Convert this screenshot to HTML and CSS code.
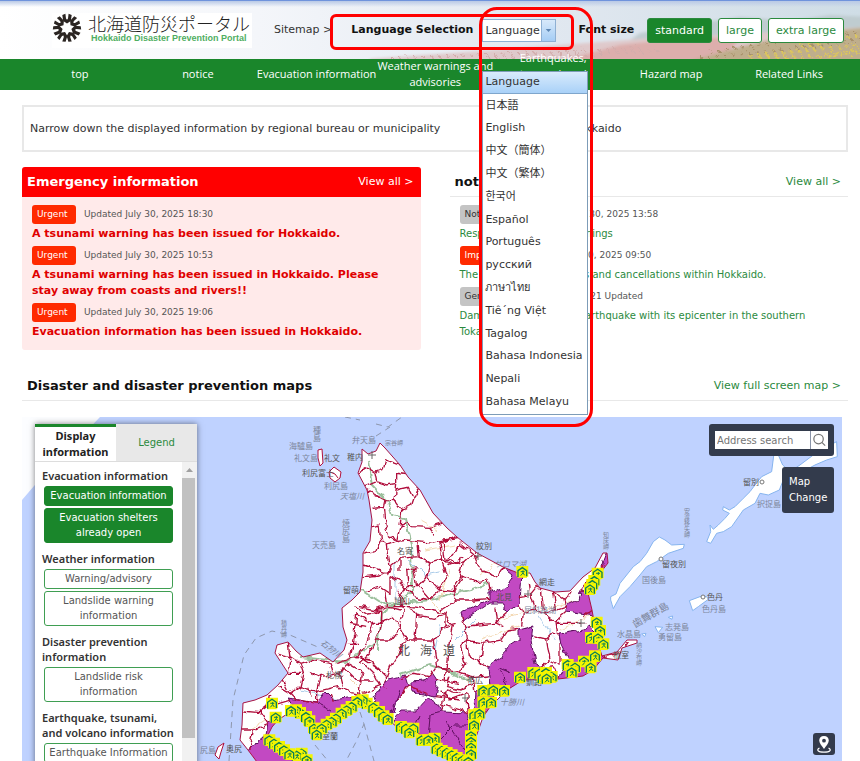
FILE: index.html
```html
<!DOCTYPE html>
<html lang="en">
<head>
    <meta charset="UTF-8">
    <meta name="viewport" content="width=device-width, initial-scale=1.0">
    <title>Hokkaido Disaster Prevention Portal</title>
    <link rel="stylesheet" href="styles.css">
</head>
<body>

<header class="header">
    <!-- flower field behind the header -->
    <svg class="header-bg" viewBox="0 0 860 59" preserveAspectRatio="xMaxYMin slice" aria-hidden="true">
        <defs>
            <linearGradient id="sky" x1="0" x2="1" y1="0" y2="0">
                <stop offset="0" stop-color="#fff"/>
                <stop offset=".3" stop-color="#f4f6fa"/>
                <stop offset=".6" stop-color="#e3e9f1"/>
                <stop offset="1" stop-color="#cfdde6"/>
            </linearGradient>
            <linearGradient id="fog" x1="0" x2="0" y1="0" y2="1">
                <stop offset="0" stop-color="#b9c9e6"/>
                <stop offset="1" stop-color="#b9c9e6" stop-opacity="0"/>
            </linearGradient>
            <filter id="soft"><feGaussianBlur stdDeviation="1.5"/></filter>
            <filter id="grain" x="0" y="0" width="1" height="1">
                <feTurbulence type="fractalNoise" baseFrequency=".4" numOctaves="2" result="n"/>
                <feDisplacementMap in="SourceGraphic" in2="n" scale="9"/>
            </filter>
        </defs>
        <rect width="860" height="59" fill="url(#sky)"/>
        <rect width="860" height="6" fill="url(#fog)"/>
        <g filter="url(#soft)">
            <path d="M640 32 L700 22 L740 16 L790 20 L830 14 L870 16 V60 H600 Z" fill="#bfccd0"/>
            <path d="M370 58 L480 50 L560 44 L640 38 L720 34 L870 26 V62 H370 Z" fill="#dfc9cb"/>
            <path d="M560 60 L620 44 L690 36 L740 38 L720 60 Z" fill="#dcaeac"/>
            <path d="M690 60 L740 46 L790 34 L870 26 V62 Z" fill="#bfae8c"/>
        </g>
        <g filter="url(#grain)" stroke-width="2" stroke-dasharray="3 5" fill="none">
            <path d="M390 57 L520 53 L640 47 M480 58 L560 55 L660 50" stroke="#d3adac"/>
            <path d="M710 52 L780 40 L860 30 M700 57 L790 48 L860 38" stroke="#a8906a"/>
            <path d="M750 56 L800 50 L860 44 M760 58 L860 52 M800 45 L860 35 M820 57 L860 48" stroke="#dcc65c" stroke-width="3"/>
        </g>
    </svg>

    <a class="logo" href="#">
        <svg class="logo-mark" viewBox="0 0 30 30" aria-hidden="true">
            <defs>
                <path id="ray" d="M15 10.500 L11.200 8 L10.300 2 L13.400 .8 L14 5.600 L15 6.800 L16 5.600 L16.600 .8 L19.700 2 L18.800 8 Z"/>
            </defs>
            <g fill="#2b2522">
                <use href="#ray"/>
                <use href="#ray" transform="rotate(51.4 15 15)"/>
                <use href="#ray" transform="rotate(102.9 15 15)"/>
                <use href="#ray" transform="rotate(154.3 15 15)"/>
                <use href="#ray" transform="rotate(205.7 15 15)"/>
                <use href="#ray" transform="rotate(257.1 15 15)"/>
                <use href="#ray" transform="rotate(308.6 15 15)"/>
            </g>
        </svg>
        <span class="logo-text">
            <span class="logo-ja" lang="ja">北海道防災ポータル</span>
            <span class="logo-en">Hokkaido Disaster Prevention Portal</span>
        </span>
    </a>

    <a class="sitemap" href="#">Sitemap &gt;</a>

    <div class="language">
        <label class="label" for="language">Language Selection</label>
        <div class="language-box">
            <select class="language-select" id="language">
                <option>Language</option>
            </select>
            <svg class="language-arrow" viewBox="0 0 14 21" aria-hidden="true"><path d="M4 9 H10 L7 12 Z" fill="#5c86b4"/></svg>
            <ul class="language-list">
                <li class="active">Language</li>
                <li lang="ja">日本語</li>
                <li>English</li>
                <li lang="ja">中文（簡体）</li>
                <li lang="ja">中文（繁体）</li>
                <li lang="ko">한국어</li>
                <li>Español</li>
                <li>Português</li>
                <li>русский</li>
                <li lang="th">ภาษาไทย</li>
                <li>Tiê´ng Việt</li>
                <li>Tagalog</li>
                <li>Bahasa Indonesia</li>
                <li>Nepali</li>
                <li>Bahasa Melayu</li>
            </ul>
        </div>
    </div>

    <div class="font-size">
        <span class="label">Font size</span>
        <button class="size-btn on" type="button">standard</button>
        <button class="size-btn" type="button">large</button>
        <button class="size-btn" type="button">extra large</button>
    </div>

    <div class="mark mark-row"></div>
    <div class="mark mark-list"></div>
</header>

<nav class="nav">
    <a href="#">top</a>
    <a href="#">notice</a>
    <a class="one-line" href="#">Evacuation information</a>
    <a href="#">Weather warnings and advisories</a>
    <a href="#">Earthquakes,<br>tsunami, and<br>volcanoes</a>
    <a href="#">Hazard map</a>
    <a href="#">Related Links</a>
</nav>

<main class="main">
    <div class="narrow">
        <span>Narrow down the displayed information by regional bureau or municipality</span>
        <span class="narrow-area">Hokkaido</span>
    </div>

    <div class="columns">
        <section class="emergency">
            <div class="emergency-head">
                <h2>Emergency information</h2>
                <a href="#">View all &gt;</a>
            </div>
            <ul class="items">
                <li>
                    <span class="badge urgent">Urgent</span><span class="date">Updated July 30, 2025 18:30</span>
                    <a href="#">A tsunami warning has been issued for Hokkaido.</a>
                </li>
                <li>
                    <span class="badge urgent">Urgent</span><span class="date">Updated July 30, 2025 10:53</span>
                    <a href="#">A tsunami warning has been issued in Hokkaido. Please stay away from coasts and rivers!!</a>
                </li>
                <li>
                    <span class="badge urgent">Urgent</span><span class="date">Updated July 30, 2025 19:06</span>
                    <a href="#">Evacuation information has been issued in Hokkaido.</a>
                </li>
            </ul>
        </section>

        <section class="notice">
            <div class="section-head">
                <h2>notice</h2>
                <a href="#">View all &gt;</a>
            </div>
            <ul class="items">
                <li>
                    <span class="badge">Notification</span><span class="date">Updated July 30, 2025 13:58</span>
                    <a href="#">Response to tsunami warnings</a>
                </li>
                <li>
                    <span class="badge urgent">Important</span><span class="date">Updated July 30, 2025 09:50</span>
                    <a href="#">The status of suspensions and cancellations within Hokkaido.</a>
                </li>
                <li>
                    <span class="badge">General</span><span class="date">August 19, 2024 21 Updated</span>
                    <a href="#">Damage caused by the earthquake with its epicenter in the southern Tokachi area (1st report)</a>
                </li>
            </ul>
        </section>
    </div>

    <section class="maps">
        <div class="section-head">
            <h2>Disaster and disaster prevention maps</h2>
            <a href="#">View full screen map &gt;</a>
        </div>

        <div class="map">
            <svg class="map-canvas" viewBox="22 417 820 344" preserveAspectRatio="xMinYMin slice" role="img" aria-label="Map of Hokkaido">
                <defs>
                    <g id="shelter">
                        <path d="M-18 -17 H18 V15 H14 V18 H-14 V14 H-18 Z" fill="#f4f500"/>
                        <path d="M-13 14 V-3 L0 -12 L13 -3 V14 M-13 3 V16" fill="none" stroke="#0b7f55" stroke-width="4"/>
                        <path d="M2 -4 V4 L-5 12 M2 4 L7 11 M-5 0 H7" fill="none" stroke="#0b7f55" stroke-width="3"/>
                    </g>
                    <path id="hokkaido" d="M362 449 L368 454 L376 451 L380 443 L385 448 L400 465 L408 477 L420 490 L433 513 L447 528 L457 537 L477 553 L503 567 L518 573 L530 573 L535 582 L540 588 L555 592 L570 591 L583 577 L595 568 L603 553 L607 553 L608 563 L597 577 L588 593 L592 610 L595 627 L598 643 L602 656 L617 652 L627 640 L637 640 L637 643 L622 648 L618 660 L603 658 L593 670 L583 676 L558 679 L523 680 L507 690 L490 707 L483 717 L476 737 L472 762 L462 762 L433 741 L417 733 L397 727 L380 713 L363 703 L343 713 L327 727 L317 737 L303 717 L290 712 L278 720 L272 727 L267 737 L287 753 L310 762 L257 762 L248 750 L240 740 L242 725 L243 703 L255 700 L267 695 L278 685 L288 673 L275 653 L277 645 L288 642 L296 651 L303 657 L320 653 L333 662 L344 650 L347 640 L343 627 L342 608 L352 600 L360 592 L363 572 L363 553 L370 541 L372 520 L369 500 L367 490 L358 473 L362 462 Z"/>
                    <clipPath id="land"><use href="#hokkaido"/></clipPath>
                    <filter id="jag" x="-5%" y="-5%" width="110%" height="110%">
                        <feTurbulence type="fractalNoise" baseFrequency=".12" numOctaves="2" seed="4" result="n"/>
                        <feDisplacementMap in="SourceGraphic" in2="n" scale="7" xChannelSelector="R" yChannelSelector="G"/>
                    </filter>
                </defs>

                <rect x="22" y="417" width="820" height="700" fill="#bfd2ff"/>
                <path d="M22 417 H100 L34 486 L22 500 Z" fill="#fcfdff"/>

                <!-- ferry routes -->
                <g fill="none" stroke="#8e97ad" stroke-dasharray="6 5">
                    <path d="M229 761 L233 700 L244 655 L256 638 L272 631 L290 635 L320 648"/>
                    <path d="M345 417 L360 420 M376 424 L388 427 L402 417 M376 436 L390 427"/>
                    <path d="M360 712 L364 724 L356 742 L346 761 M364 724 L374 761 M315 745 L328 761"/>
                </g>

                <!-- other islands -->
                <g transform="translate(640 410) scale(.3333)" fill="#fff" stroke="#86b4ee" stroke-width="3">
                    <path d="M-88 560 L-72 552 L-60 520 L-20 470 L0 455 L20 430 L40 395 L58 381 L75 390 L95 405 L133 403 L130 415 L85 430 L50 455 L20 470 L0 495 L-30 530 L-60 560 L-74 585 L-80 596 L-84 583 L-88 570 Z"/>
                    <path d="M200 395 L212 365 L210 345 L220 358 L235 345 L255 325 L268 310 L248 300 L250 290 L268 300 L285 290 L310 265 L330 245 L345 225 L365 200 L395 185 L402 130 L412 128 L428 165 L450 185 L480 165 L520 135 L560 110 L590 95 L592 140 L560 150 L525 165 L470 195 L430 210 L418 240 L385 255 L360 250 L345 280 L310 300 L275 350 L250 365 L230 370 L212 400 Z"/>
                    <path d="M148 572 L180 560 L200 560 L205 568 L175 590 L158 602 Z"/>
                    <path d="M45 650 L68 652 L55 668 Z M85 622 L98 618 L96 628 Z M5 672 L18 670 L14 680 Z"/>
                </g>
                <g fill="#fff" stroke="#b0103c">
                    <path d="M318 450 L322 449 L323 463 L320 466 L318 458 Z"/>
                    <path d="M329 472 L334 467 L341 472 L340 478 L335 482 L330 478 Z M330 472 L335 474 L338 478"/>
                    <path d="M218 747 L224 743 L221 752 L219 759 L215 755 Z"/>
                </g>

                <use href="#hokkaido" fill="#fff"/>

                <g clip-path="url(#land)">
                    <g filter="url(#jag)">
                        <!-- roads and rivers -->
                        <g fill="none" stroke-width="1">
                            <path d="M368 460 L372 485 L388 502 L392 515 L405 518 L412 545 L413 590 L395 605 L382 612 L378 650 M362 590 L385 605 L430 600 L470 590 L488 583 M300 657 L345 662 L380 640 M400 675 L430 665 L470 680" stroke="#9bbf9c" stroke-width="2"/>
                            <path d="M395 560 L395 600 M410 560 L425 575 L440 572 M440 625 L435 650 M300 690 L340 700 M475 620 L455 640 M538 615 L545 625 L555 640" stroke="#a9cbe9"/>
                            <path d="M425 550 L455 545 M430 600 L450 620 M480 575 L500 560 M500 620 L530 610 M250 730 L265 720 M350 680 L370 700 M545 610 L580 600 M480 640 L520 625 M420 520 L438 530 M440 600 L450 570 M560 630 L590 615" stroke="#f3d9b4"/>
                        </g>

                        <!-- areas under warning -->
                        <g fill="#c248c2" stroke="#5c0f5c" stroke-width="1">
                            <path d="M374 698 L388 680 L405 676 L408 686 L397 700 L393 712 L385 716 Z"/>
                            <path d="M411 682 L424 681 L434 674 L438 680 L435 697 L423 694 L411 692 Z"/>
                            <path d="M393 718 L400 710 L417 710 L428 698 L440 705 L442 712 L468 713 L474 740 L476 765 L460 765 L430 745 L395 730 Z"/>
                            <path d="M288 698 L317 703 L325 692 L333 700 L360 696 L345 709 L325 724 L318 740 L300 715 Z"/>
                            <path d="M246 752 L263 738 L270 742 L292 754 L312 765 L252 765 Z M268 722 L282 718 L278 728 L265 742 Z"/>
                            <path d="M503 566 L522 572 L520 603 L508 613 L503 610 L503 603 L490 603 L463 621 L461 612 L490 600 L490 590 L495 593 L510 583 L513 574 Z"/>
                            <path d="M566 606 L578 600 L580 591 L590 592 L594 616 L566 612 Z"/>
                            <path d="M560 634 L583 630 L590 626 L602 638 L605 660 L586 678 L556 682 L569 660 L562 645 Z"/>
                            <path d="M518 630 L533 626 L531 640 L535 664 L542 668 L523 684 L505 692 L490 686 L488 667 L503 657 L507 647 L518 640 Z"/>
                            <path d="M475 692 L492 690 L494 708 L480 716 L474 708 Z M601 566 L607 550 L612 564 L602 568 Z"/>
                            <path fill="none" d="M391 712 L400 690 M410 740 L420 715 M428 740 L430 715 L442 712 M440 740 L455 725 L470 725 M445 720 L465 750 M508 690 L500 668 L510 672 M318 704 L330 710"/>
                        </g>

                        <!-- municipal borders, northwest half -->
                        <g transform="translate(200 410) scale(.3333)" fill="none" stroke="#b0103c" stroke-width="4">
                            <path d="M475 190 L500 175 L525 190 L550 180 L557 150 L600 165 M525 190 L530 215 L495 230 M530 215 L560 225 L590 220 L590 190 L625 195"/>
                            <path d="M500 240 L540 262 L555 270 L585 272 L590 225 M590 240 L625 232 L640 262 L632 285 L605 300 L585 272 M640 262 L658 235"/>
                            <path d="M515 295 L550 292 L555 270 M550 292 L555 340 L562 375 L590 395 L600 350 L620 335 L640 350 L690 352 L700 375 M690 352 L740 335 M605 300 L600 350"/>
                            <path d="M516 350 L540 345 L545 390 L530 425 L490 432 M545 390 L562 405 L590 395 L620 390 L650 395 L655 440 L600 445 L570 470 M562 405 L570 470 L560 490 L490 465"/>
                            <path d="M490 500 L540 495 L575 475 M570 500 L570 550 L540 530 L500 545 M555 545 L560 590 L525 600 L480 590 M460 590 L500 610 L545 600 L545 640 L520 640 L470 610"/>
                            <path d="M470 610 L465 680 L450 740 M520 640 L500 700 L470 745 M545 640 L530 690 L510 730 L480 760 M530 690 L570 690 L600 650 L580 620 L545 640"/>
                            <path d="M600 650 L620 690 L600 720 L575 760 L560 800 M650 395 L700 400 L720 395 L775 385 M720 395 L725 450 L690 460 L655 440 M690 460 L680 500 L655 530 L620 530 L600 560"/>
                            <path d="M620 480 L625 530 M600 480 L600 445 M620 480 L650 470 M725 450 L755 465 L790 440 M725 450 L740 500 L720 540 L680 500 M720 540 L760 545 L790 500 M655 530 L690 570 L720 545"/>
                            <path d="M640 590 L690 600 L735 610 L735 650 M735 610 L700 625 L650 615 L630 590 M600 560 L610 610 L600 650 M650 615 L645 690 M620 690 L700 690 L735 650 M700 690 L710 770 L750 790 M735 650 L770 640 M710 770 L690 800 L640 790 L600 810"/>
                            <path d="M610 520 L640 560 L690 570 M580 590 L640 590 M570 500 L610 520 M590 540 L620 580 M560 590 L600 600 M640 470 L650 530 M450 640 L500 650 M440 700 L480 700"/>
                            <path d="M265 700 L270 740 L300 760 M230 730 L270 740 L265 790 M300 760 L310 790 L265 790 M300 760 L330 750 L390 760 M310 790 L300 830 L350 845 M270 850 L300 830 M235 830 L270 850 L290 870 L350 880 L350 845 L360 800 L330 785 M360 800 L420 790 L440 760"/>
                            <path d="M390 760 L400 790 M350 845 L410 830 L450 845 L480 850 M420 790 L430 830 M440 760 L490 790 L480 850 M490 760 L520 790 L540 830 L490 850 M430 770 L470 810 L520 810 M410 760 L460 740 L510 750 L560 800 L555 835 M480 740 L540 780 M390 850 L400 875 M240 790 L265 840 M330 830 L330 860"/>
                            <path d="M130 900 L180 905 L200 890 L235 880 L270 870 M180 905 L205 940 L160 960 L150 1020 M125 960 L160 960 M200 890 L210 855 M590 870 L625 830 L680 850 M710 810 L780 820 M705 860 L780 870 M725 905 L740 840 L780 850 M740 760 L735 820"/>
                        </g>

                        <!-- municipal borders, east half -->
                        <g transform="translate(440 410) scale(.3333)" fill="none" stroke="#b0103c" stroke-width="4">
                            <path d="M0 400 L50 380 M10 400 L15 450 L40 435 L60 400 L110 440 M15 450 L70 460 L60 500 L40 530 L45 570 L0 600 M70 460 L100 430 L120 480 M100 430 L110 420 M120 480 L170 500 L190 470 M60 500 L110 515 L145 510 L150 540"/>
                            <path d="M40 570 L100 570 L150 565 M65 620 L75 650 L110 645 L165 640 L200 610 M75 650 L80 690 L130 700 L185 690 L205 660 L235 655 M20 620 L40 650 L30 700 L20 780 L60 790 L75 760 L60 700 L80 690"/>
                            <path d="M165 590 L170 640 L190 650 M80 690 L85 740 L120 760 L145 770 M60 790 L100 800 L145 795 M130 700 L120 760 M100 800 L105 850 M30 800 L20 830 L60 840 L100 820 M0 840 L30 870 L80 850 M0 880 L60 900 L85 910 M80 850 L85 910 M0 780 L20 780 M0 660 L40 650"/>
                            <path d="M240 560 L270 555 L290 530 L300 540 M270 555 L285 600 L250 610 L235 580 M285 600 L310 610 L350 600 L340 545 M305 545 L310 600 M250 610 L245 650 M350 600 L380 590 L375 570 L345 550 M375 570 L390 545 M310 610 L345 635 L380 605 M345 635 L350 670 L360 675"/>
                            <path d="M280 680 L320 690 L340 670 L350 670 M320 690 L330 750 L300 775 M330 750 L360 765 L360 700 M350 640 L440 640 M265 520 L270 555 M340 770 L355 808 M455 600 L430 620 M490 740 L540 730 L560 700 M425 545 L470 490 L490 465 M280 780 L340 770"/>
                        </g>
                    </g>
                </g>
                <use href="#hokkaido" fill="none" stroke="#a81444"/>

                <!-- place names -->
                <g class="place">
                    <text x="289" y="449">海驢島</text>
                    <text x="294" y="461">礼文島</text>
                    <text x="324" y="461" class="town">礼文</text>
                    <text x="302" y="476" class="town">利尻富士</text>
                    <text x="324" y="489">利尻島</text>
                    <text x="352" y="443">弁天島</text>
                    <text x="385" y="445" class="small">宗谷岬</text>
                    <text x="347" y="460" class="town">稚内</text>
                    <text x="340" y="499" class="water">天塩川</text>
                    <text x="312" y="548">天売島</text>
                    <text x="343" y="593" class="town">留萌</text>
                    <text x="397" y="554" class="town">名寄</text>
                    <text x="394" y="604" class="town">旭川</text>
                    <text x="326" y="678" class="town">札幌</text>
                    <text x="322" y="739" class="town">室蘭</text>
                    <text x="226" y="752" class="town">奥尻</text>
                    <text x="200" y="753">尻島</text>
                    <text x="398" y="655" class="big">北</text>
                    <text x="420" y="655" class="big">海</text>
                    <text x="443" y="655" class="big">道</text>
                    <text x="476" y="549" class="town">紋別</text>
                    <text x="494" y="567" class="water">サロマ湖</text>
                    <text x="496" y="600" class="town">北見</text>
                    <text x="539" y="585" class="town">網走</text>
                    <text x="524" y="613">屈斜路湖</text>
                    <text x="526" y="685" class="town">釧路</text>
                    <text x="500" y="705" class="water">十勝川</text>
                    <text x="467" y="683" class="town">帯広</text>
                    <text x="613" y="658" class="town">根室</text>
                    <text x="617" y="637">水晶島</text>
                    <text x="642" y="583">国後島</text>
                    <text x="662" y="567" class="town">留夜別</text>
                    <text x="757" y="507">択捉島</text>
                    <text x="743" y="485" class="town">留別</text>
                    <text x="707" y="600" class="town">色丹</text>
                    <text x="702" y="612">色丹島</text>
                    <text x="665" y="630">志発島</text>
                    <text x="658" y="640">勇留島</text>
                    <text x="0" y="0" class="islands" transform="translate(635 628) rotate(-30)">歯舞群島</text>
                    <text x="0" y="0" class="water" transform="translate(320 644) rotate(38)">石狩川</text>
                    <text class="tall" x="317" y="426">種島</text>
                    <text class="tall" x="346" y="519">焼尻島</text>
                    <text class="tall small" x="284" y="620">積丹岬</text>
                    <text class="tall small" x="606" y="532">知床岬</text>
                    <text class="tall small" x="687" y="508">安渡移矢岬</text>
                    <text class="tall small" x="639" y="642">納沙布岬</text>
                </g>
                <g fill="#fff" stroke="#777">
                    <circle cx="661" cy="559" r="2"/>
                    <circle cx="762" cy="482" r="2"/>
                    <circle cx="703" cy="597" r="2"/>
                </g>
                <path d="M368 455 H376 M372 451 V459 M475 556 H482 M478 552 V560 M577 623 H585 M581 619 V627 M524 594 H532 M528 590 V598 M462 698 H469 M465 694 V702" stroke="#666"/>

                <!-- open shelters -->
                <g transform="translate(200 410) scale(.3333)">
                    <use href="#shelter" x="216" y="880"/>
                    <use href="#shelter" x="227" y="922"/>
                    <use href="#shelter" x="300" y="908"/>
                    <use href="#shelter" x="288" y="900"/>
                    <use href="#shelter" x="273" y="902"/>
                    <use href="#shelter" x="318" y="920"/>
                    <use href="#shelter" x="328" y="933"/>
                    <use href="#shelter" x="342" y="955"/>
                    <use href="#shelter" x="500" y="880"/>
                    <use href="#shelter" x="488" y="870"/>
                    <use href="#shelter" x="472" y="875"/>
                    <use href="#shelter" x="455" y="890"/>
                    <use href="#shelter" x="440" y="900"/>
                    <use href="#shelter" x="425" y="910"/>
                    <use href="#shelter" x="408" y="925"/>
                    <use href="#shelter" x="395" y="935"/>
                    <use href="#shelter" x="380" y="943"/>
                    <use href="#shelter" x="365" y="955"/>
                    <use href="#shelter" x="350" y="973"/>
                    <use href="#shelter" x="520" y="892"/>
                    <use href="#shelter" x="537" y="905"/>
                    <use href="#shelter" x="550" y="918"/>
                    <use href="#shelter" x="563" y="927"/>
                    <use href="#shelter" x="603" y="950"/>
                    <use href="#shelter" x="618" y="955"/>
                    <use href="#shelter" x="640" y="955"/>
                    <use href="#shelter" x="628" y="967"/>
                    <use href="#shelter" x="665" y="990"/>
                    <use href="#shelter" x="704" y="985"/>
                    <use href="#shelter" x="685" y="990"/>
                    <use href="#shelter" x="710" y="1015"/>
                    <use href="#shelter" x="725" y="1022"/>
                    <use href="#shelter" x="740" y="1028"/>
                    <use href="#shelter" x="755" y="1035"/>
                    <use href="#shelter" x="770" y="1043"/>
                    <use href="#shelter" x="208" y="990"/>
                    <use href="#shelter" x="222" y="1000"/>
                    <use href="#shelter" x="237" y="1010"/>
                    <use href="#shelter" x="252" y="1020"/>
                    <use href="#shelter" x="305" y="1030"/>
                    <use href="#shelter" x="290" y="1036"/>
                    <use href="#shelter" x="268" y="1032"/>
                    <use href="#shelter" x="320" y="1050"/>
                </g>
                <g transform="translate(440 410) scale(.3333)">
                    <use href="#shelter" x="247" y="485"/>
                    <use href="#shelter" x="473" y="490"/>
                    <use href="#shelter" x="463" y="512"/>
                    <use href="#shelter" x="457" y="524"/>
                    <use href="#shelter" x="450" y="537"/>
                    <use href="#shelter" x="470" y="637"/>
                    <use href="#shelter" x="480" y="662"/>
                    <use href="#shelter" x="453" y="683"/>
                    <use href="#shelter" x="474" y="684"/>
                    <use href="#shelter" x="490" y="702"/>
                    <use href="#shelter" x="465" y="738"/>
                    <use href="#shelter" x="432" y="754"/>
                    <use href="#shelter" x="452" y="772"/>
                    <use href="#shelter" x="383" y="764"/>
                    <use href="#shelter" x="405" y="772"/>
                    <use href="#shelter" x="395" y="786"/>
                    <use href="#shelter" x="280" y="788"/>
                    <use href="#shelter" x="240" y="802"/>
                    <use href="#shelter" x="298" y="790"/>
                    <use href="#shelter" x="318" y="788"/>
                    <use href="#shelter" x="335" y="800"/>
                    <use href="#shelter" x="308" y="803"/>
                    <use href="#shelter" x="320" y="805"/>
                    <use href="#shelter" x="130" y="842"/>
                    <use href="#shelter" x="160" y="840"/>
                    <use href="#shelter" x="192" y="842"/>
                    <use href="#shelter" x="130" y="877"/>
                    <use href="#shelter" x="153" y="877"/>
                    <use href="#shelter" x="103" y="915"/>
                    <use href="#shelter" x="118" y="911"/>
                    <use href="#shelter" x="102" y="945"/>
                    <use href="#shelter" x="93" y="978"/>
                    <use href="#shelter" x="93" y="995"/>
                    <use href="#shelter" x="93" y="1012"/>
                    <use href="#shelter" x="93" y="1032"/>
                    <use href="#shelter" x="68" y="1050"/>
                    <use href="#shelter" x="85" y="1055"/>
                </g>
            </svg>

            <div class="panel">
                <div class="tabs">
                    <button class="tab on" type="button">Display information</button>
                    <button class="tab" type="button">Legend</button>
                </div>
                <div class="panel-body">
                    <div class="layers">
                        <h3>Evacuation information</h3>
                        <button class="layer on" type="button">Evacuation information</button>
                        <button class="layer on" type="button">Evacuation shelters already open</button>
                        <h3>Weather information</h3>
                        <button class="layer" type="button">Warning/advisory</button>
                        <button class="layer" type="button">Landslide warning information</button>
                        <h3>Disaster prevention information</h3>
                        <button class="layer" type="button">Landslide risk information</button>
                        <h3>Earthquake, tsunami, and volcano information</h3>
                        <button class="layer" type="button">Earthquake Information</button>
                    </div>
                    <div class="scrollbar">
                        <svg viewBox="0 0 14 16" aria-hidden="true"><path d="M4 10 H11 L7.5 6 Z" fill="#a0a0a0"/></svg>
                        <div class="thumb"></div>
                    </div>
                </div>
            </div>

            <form class="search">
                <input type="text" placeholder="Address search" aria-label="Address search">
                <button type="button" aria-label="Search">
                    <svg viewBox="0 0 18 18" fill="none" stroke="#777" stroke-width="1.3" aria-hidden="true"><circle cx="8" cy="8" r="5"/><path d="M11.5 11.5 L15 15"/></svg>
                </button>
            </form>
            <button class="map-change" type="button">Map Change</button>
            <button class="locate" type="button" aria-label="Current location">
                <svg viewBox="0 0 22 22" aria-hidden="true">
                    <path d="M11 3 C8 3 6.200 5 6.200 7.600 C6.200 10.500 9 13 11 16 C13 13 15.800 10.500 15.800 7.600 C15.800 5 14 3 11 3 Z M11 5.800 A1.900 1.900 0 1 1 11 9.600 A1.900 1.900 0 1 1 11 5.800 Z" fill="#fff" fill-rule="evenodd"/>
                    <path d="M6.500 15 C3 17 5 19.200 11 19.200 C17 19.200 19 17 15.500 15" fill="none" stroke="#fff" stroke-width="1.300"/>
                </svg>
            </button>
        </div>
    </section>
</main>

</body>
</html>
```
FILE: styles.css
```css
* {
    box-sizing: border-box;
}

body {
    margin: 0;
    height: 100vh;
    display: flex;
    flex-direction: column;
    overflow: hidden;
    font-family: "DejaVu Sans", "Noto Sans CJK JP", sans-serif;
    font-size: 11px;
    line-height: 16px;
    color: #333;
    background-color: #fff;
}

h2, h3, ul {
    margin: 0;
    padding: 0;
}

ul {
    list-style: none;
}

a {
    color: #2b8a3e;
    text-decoration: none;
}

button, input, select {
    font-family: inherit;
    margin: 0;
}

/* header */
.header {
    position: relative;
    flex: none;
    display: flex;
    align-items: center;
    height: 59px;
    padding: 0 16px 0 52px;
    border-top: 1px solid #6f93dc;
}

.header-bg {
    position: absolute;
    inset: 0;
    width: 100%;
    height: 100%;
    z-index: -1;
}

.logo {
    display: flex;
    align-items: center;
    gap: 6px;
    width: 200px;
    padding-bottom: 5px;
    background-color: #fff;
}

.logo-mark {
    width: 30px;
    height: 30px;
    flex: none;
}

.logo-text {
    display: flex;
    flex-direction: column;
    white-space: nowrap;
}

.logo-ja {
    font-family: "Noto Sans CJK JP", sans-serif;
    font-size: 18px;
    font-weight: 300;
    line-height: 20px;
    color: #222;
}

.logo-en {
    padding-left: 3px;
    font-family: "Liberation Sans", sans-serif;
    font-size: 9px;
    font-weight: bold;
    line-height: 10px;
    color: #4fae62;
}

.sitemap {
    margin-left: 22px;
    color: #333;
}

.language {
    display: flex;
    align-items: center;
    gap: 9px;
    margin-left: 19px;
}

.label {
    font-weight: bold;
    color: #111;
    white-space: nowrap;
}

.language-box {
    position: relative;
}

.language-select {
    display: block;
    appearance: none;
    width: 74px;
    height: 23px;
    padding: 0 0 0 2px;
    border: 1px solid #8fb0d3;
    border-radius: 0;
    background-color: #fff;
    font-size: 11px;
    color: #333;
}

.language-arrow {
    position: absolute;
    top: 1px;
    right: 1px;
    width: 14px;
    height: 21px;
    background: linear-gradient(#d8e9fa, #a5cdf5);
    border-left: 1px solid #8fb0d3;
    pointer-events: none;
}

.language-list {
    position: absolute;
    z-index: 4;
    top: 52px;
    left: 0;
    width: 106px;
    height: 344px;
    display: grid;
    grid-auto-rows: 1fr;
    border: 1px solid #7d9cb8;
    background-color: #fff;
    color: #333;
    white-space: nowrap;
}

.language-list li {
    display: flex;
    align-items: center;
    padding-left: 2px;
}

.language-list .active {
    background: linear-gradient(#d9ebfc, #a9d1f8);
    border-bottom: 1px solid #7fa6cc;
}

.font-size {
    display: flex;
    align-items: center;
    gap: 6px;
    margin-left: auto;
}

.font-size .label {
    margin-right: 7px;
}

.size-btn {
    height: 25px;
    padding: 0 7px;
    border: 1px solid #2b8a3e;
    border-radius: 3px;
    background-color: #fff;
    font-size: 11px;
    color: #2b8a3e;
    white-space: nowrap;
}

.size-btn.on {
    background-color: #1a862b;
    color: #fff;
}

/* red outlines around the language menu */
.mark {
    position: absolute;
    z-index: 5;
    border: 3px solid #f00;
    pointer-events: none;
}

.mark-row {
    top: 13px;
    left: 330px;
    width: 244px;
    height: 36px;
    border-radius: 6px;
}

.mark-list {
    top: 6px;
    left: 479px;
    width: 114px;
    height: 420px;
    border-radius: 18px;
}

/* navigation, long labels may run over the bar's edges */
.nav {
    position: relative;
    z-index: 2;
    flex: none;
    display: grid;
    grid-template-columns: repeat(7, 1fr);
    grid-template-rows: 29px;
    align-items: center;
    height: 31px;
    padding: 0 12px 0 21px;
    background-color: #1a862b;
}

.nav a {
    font-family: "Open Sans", sans-serif;
    text-align: center;
    color: #fff;
}

.nav .one-line {
    white-space: nowrap;
}

/* content */
.main {
    flex: 1;
    min-height: 0;
    display: flex;
    flex-direction: column;
    padding: 15px 12px 0 22px;
}

.narrow {
    flex: none;
    display: flex;
    align-items: center;
    height: 47px;
    padding: 0 6px;
    border: 2px solid #e8e8e8;
}

.narrow-area {
    margin-left: 130px;
}

.columns {
    flex: none;
    display: grid;
    grid-template-columns: 1fr 1fr;
    gap: 29px;
    margin-top: 15px;
}

h2 {
    font-size: 13px;
    line-height: 16px;
    color: #111;
}

.emergency {
    border-radius: 3px;
    background-color: #ffeaea;
    padding-bottom: 6px;
}

.emergency-head,
.section-head {
    display: flex;
    align-items: center;
    justify-content: space-between;
    height: 30px;
    padding: 0 7px 0 5px;
}

.emergency-head {
    border-radius: 3px 3px 0 0;
    background-color: #f00;
}

.emergency-head h2,
.emergency-head a {
    color: #fff;
}

.section-head {
    border-bottom: 1px solid #e8e8e8;
}

.items {
    padding: 8px 10px 0;
}

.emergency .items {
    padding-right: 20px;
}

.items li {
    padding-bottom: 4px;
    line-height: 21px;
}

.badge {
    display: inline-block;
    min-width: 44px;
    height: 19px;
    margin-right: 8px;
    padding: 0 5px;
    border-radius: 3px;
    background-color: #c4c4c4;
    font-size: 9px;
    line-height: 19px;
    vertical-align: top;
}

.badge.urgent {
    background-color: #ff2a00;
    color: #fff;
}

.date {
    display: inline-block;
    font-size: 9px;
    line-height: 19px;
    color: #555;
    vertical-align: top;
}

.items a {
    display: block;
    font-size: 10px;
    line-height: 16px;
}

.emergency .items a {
    font-size: 11px;
    font-weight: bold;
    color: #e00000;
}

.maps {
    flex: 1;
    min-height: 0;
    display: flex;
    flex-direction: column;
    margin-top: 21px;
}

.maps .section-head {
    flex: none;
}

/* map */
.map {
    position: relative;
    flex: 1;
    min-height: 0;
    margin: 16px 6px 0 0;
    overflow: hidden;
}

.map-canvas {
    display: block;
    width: 100%;
    height: 100%;
}

.place {
    font-family: "Noto Sans CJK JP", sans-serif;
    font-size: 8px;
    fill: #7d869c;
}

.place .town {
    fill: #555;
}

.place .small {
    font-size: 6px;
}

.place .big {
    font-size: 12px;
    fill: #555;
}

.place .islands {
    font-size: 10px;
}

.place .water {
    font-style: italic;
}

.place .tall {
    writing-mode: vertical-rl;
}

.panel {
    position: absolute;
    top: 7px;
    left: 13px;
    bottom: -20px;
    width: 162px;
    display: flex;
    flex-direction: column;
    background-color: #fff;
    box-shadow: 0 0 6px rgba(0, 0, 0, 0.5);
}

.tabs {
    display: grid;
    grid-template-columns: 1fr 1fr;
    height: 38px;
    flex: none;
    border-bottom: 1px solid #ddd;
}

.tab {
    padding: 0 6px;
    border: 0;
    background-color: #e8e8e8;
    font-size: 10px;
    line-height: 16px;
    color: #2b8a3e;
}

.tab.on {
    border-top: 3px solid #1a862b;
    background-color: #fff;
    font-family: "Noto Sans", sans-serif;
    font-size: 11px;
    font-weight: bold;
    color: #222;
}

.panel-body {
    flex: 1;
    min-height: 0;
    display: flex;
    justify-content: space-between;
    overflow: hidden;
}

.layers {
    width: 140px;
    padding: 6px 0 0 7px;
}

.layers h3 {
    font-family: "Noto Sans", sans-serif;
    font-size: 11px;
    font-weight: 600;
    line-height: 15px;
    margin-bottom: 3px;
}

.layer {
    display: block;
    width: 129px;
    margin: 0 0 2px 2px;
    padding: 1px 4px 2px;
    border: 1px solid #3f9e52;
    border-radius: 3px;
    background-color: #fff;
    font-size: 10px;
    line-height: 15px;
    color: #555;
}

.layer + h3 {
    margin-top: 8px;
}

.layer.on {
    border-color: #1a862b;
    background-color: #1a862b;
    color: #fff;
}

.scrollbar {
    width: 15px;
    padding-right: 2px;
    background-color: #f1f1f1;
}

.scrollbar svg {
    display: block;
    height: 16px;
}

.thumb {
    height: 260px;
    background-color: #c1c1c1;
}

.search {
    position: absolute;
    top: 7px;
    right: 8px;
    display: flex;
    padding: 7px 6px;
    border-radius: 3px;
    background-color: #333b4c;
}

.search input {
    width: 95px;
    height: 18px;
    padding: 0 2px;
    border: 0;
    font-size: 10px;
}

.search input::placeholder {
    color: #757575;
}

.search button {
    width: 18px;
    height: 18px;
    padding: 0;
    border: 0;
    border-left: 1px solid #8a94a8;
    background-color: #fff;
}

.search svg {
    display: block;
    width: 17px;
    height: 18px;
}

.map-change {
    position: absolute;
    top: 50px;
    right: 8px;
    width: 52px;
    padding: 7px;
    border: 0;
    border-radius: 3px;
    background-color: #333b4c;
    font-size: 10px;
    line-height: 16px;
    text-align: left;
    color: #fff;
}

.locate {
    position: absolute;
    top: 316px;
    right: 7px;
    width: 22px;
    height: 22px;
    padding: 0;
    border: 0;
    border-radius: 3px;
    background-color: #333b4c;
}

.locate svg {
    display: block;
}
```
